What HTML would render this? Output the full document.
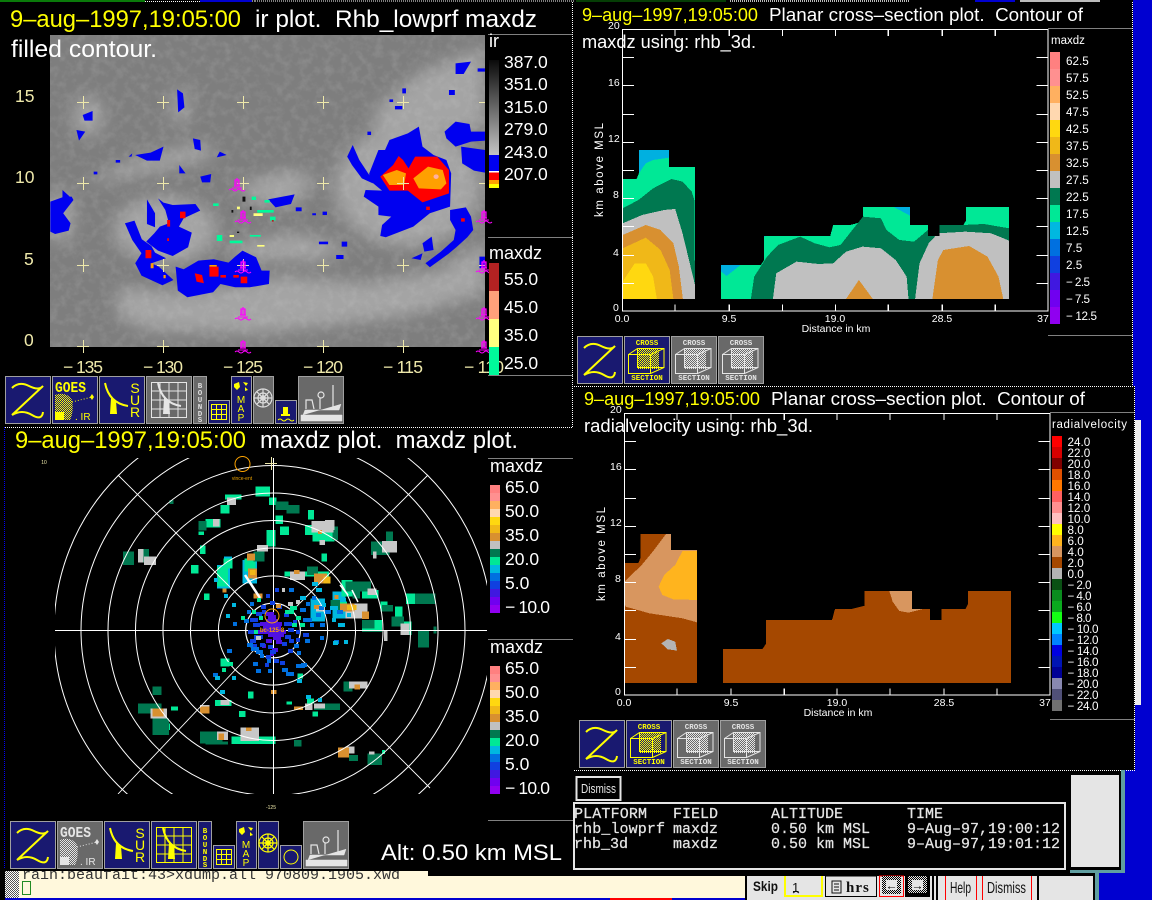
<!DOCTYPE html>
<html><head><meta charset="utf-8"><title>Zebra display</title>
<style>
html,body{margin:0;padding:0;background:#000;width:1152px;height:900px;overflow:hidden}
svg{display:block;position:absolute;left:0;top:0}
text{font-family:"Liberation Sans",sans-serif;white-space:pre}
.w{fill:#fff}.y{fill:#ff0}.p{fill:#eee8aa}
.l{fill:#fff;font-size:17.5px}
.m{fill:#fff;font-size:11.7px}
.s{fill:#fff;font-size:10.5px}
.t{fill:#e5e5e5;font-family:"Liberation Mono",monospace;font-size:15px;stroke:#e5e5e5;stroke-width:.25}
.b{font-family:"Liberation Mono",monospace;font-weight:bold;font-size:7.5px;text-anchor:middle}
</style></head><body>
<svg width="1152" height="900" viewBox="0 0 1152 900" xmlns="http://www.w3.org/2000/svg">
<defs>
<filter id="bl" x="-30%" y="-30%" width="160%" height="160%"><feGaussianBlur stdDeviation="24"/></filter>
<filter id="tx" x="0" y="0" width="100%" height="100%"><feTurbulence type="fractalNoise" baseFrequency=".12" numOctaves="3" seed="7"/><feColorMatrix values="0 0 0 0 .8 0 0 0 0 .8 0 0 0 0 .8 1.8 0 0 0 -.75"/></filter>
<pattern id="cy" width="2" height="2" patternUnits="userSpaceOnUse"><rect width="2" height="2" fill="#191970"/><rect width="1" height="1" fill="#ff0"/><rect x="1" y="1" width="1" height="1" fill="#ff0"/></pattern>
<pattern id="cw" width="2" height="2" patternUnits="userSpaceOnUse"><rect width="2" height="2" fill="#696969"/><rect width="1" height="1" fill="#e5e5e5"/><rect x="1" y="1" width="1" height="1" fill="#e5e5e5"/></pattern>
<pattern id="cg" width="2" height="2" patternUnits="userSpaceOnUse"><rect width="2" height="2" fill="#fff"/><rect width="1" height="1" fill="#555"/><rect x="1" y="1" width="1" height="1" fill="#555"/></pattern>
<pattern id="cb" width="2" height="2" patternUnits="userSpaceOnUse"><rect width="2" height="2" fill="#e5e5e5"/><rect width="1" height="1" fill="#000"/><rect x="1" y="1" width="1" height="1" fill="#000"/></pattern>
<g id="z"><rect x=".5" y=".5" width="45" height="47" fill="#191970" stroke="#a0a0a0"/><path d="M7 12Q14 5 24 10T38 10L7 39Q17 33 27 39T38 36" fill="none" stroke="#ff0" stroke-width="2"/></g>
<g id="buoy" fill="none" stroke="#f0f"><path d="M-2-10h4v6h-4zM-3-4h6M0-12v2" stroke-width="1.2" fill="#f0f" fill-opacity=".45"/><path d="M-8 0q2-2 4 0t4 0 4 0 4 0" stroke-width="1"/><path d="M-5-2h10" stroke-width="1"/></g>
<g id="grid" fill="none" stroke="currentColor" stroke-width="1"><rect x="5.5" y="6.5" width="35" height="35"/><path d="M14 6.5v35M23 6.5v35M32 6.5v35M5.5 15h35M5.5 24h35M5.5 33h35"/></g>
<g id="dish"><path d="M12 7Q16 27 35 30" fill="none" stroke="currentColor" stroke-width="2"/><path d="M18 22l5 3 1 13h-7z" fill="currentColor"/></g>
<g id="sg" fill="none" stroke="currentColor"><rect x="3.5" y="4.5" width="15" height="15"/><path d="M8.500 4.500v15M13.500 4.500v15M3.500 9.500h15M3.500 14.500h15"/></g>
<g id="wheel" fill="none" stroke="currentColor" stroke-width="1.2"><circle cx="10" cy="22" r="9"/><circle cx="10" cy="22" r="5"/><circle cx="10" cy="22" r="2.300"/><path d="M10 13v18M1 22h18M3.600 15.600l12.800 12.800M16.400 15.600L3.600 28.400"/></g>
<g id="ship" fill="none" stroke="currentColor"><path d="M3 39h41v6H3zM5 39l2-5h34l2-6" fill="currentColor" stroke-width=".5"/><path d="M8 33V24h6l2 9M22 33V22M35 33V9" stroke-width="1.2"/><circle cx="23" cy="19" r="3" stroke-width="1.2"/></g>
<g id="cube" fill="none" stroke="currentColor" stroke-width="1"><path d="M4.500 18.500h22v19h-22zM4.500 18.500l9-6h26.500v19l-13.500 6M26.500 18.500l13.500-6M13.500 12.500v19h26.500"/></g>
<g id="cy1"><rect x=".5" y=".5" width="45" height="47" fill="#191970" stroke="#a0a0a0"/><rect x="13" y="13" width="22" height="20" fill="url(#cy)"/><use href="#cube" color="#ff0"/><text class="b" x="23" y="9" fill="#ff0">CROSS</text><text class="b" x="23" y="44" fill="#ff0">SECTION</text></g>
<g id="cg1"><rect x=".5" y=".5" width="45" height="47" fill="#696969" stroke="#a0a0a0"/><rect x="13" y="13" width="22" height="20" fill="url(#cw)"/><use href="#cube" color="#e5e5e5"/><text class="b" x="23" y="9" fill="#e5e5e5">CROSS</text><text class="b" x="23" y="44" fill="#e5e5e5">SECTION</text></g>
<g id="sil"><path d="M127 537h38l6-17v-70h82v51h71v396H127zM395 795h108l9-15V708h180l8-33h46l35-10v-44h128v54h49v33h32v-33h65l7-15v-39h117v276H395z"/></g>
<g id="ticks" fill="none" stroke="#fff" stroke-width="3"><path d="M127 88H1285V933H127zM270 933v-20M417 933v-20M562 933v-20M706 933v-20M850 933v-20M997 933v-20M1141 933v-20M270 88v20M417 88v20M562 88v20M706 88v20M850 88v20M997 88v20M1141 88v20M127 172h31M127 256h31M127 343h31M127 427h31M127 511h31M127 595h31M127 679h31M127 766h31M127 850h31M1285 172h-31M1285 256h-31M1285 343h-31M1285 427h-31M1285 511h-31M1285 595h-31M1285 679h-31M1285 766h-31M1285 850h-31"/></g>
<clipPath id="rc"><rect x="55" y="458" width="432" height="336"/></clipPath>
<clipPath id="term"><rect x="19" y="871" width="726" height="26"/></clipPath>
</defs>

<!-- backgrounds -->
<rect width="1152" height="900" fill="#000"/>
<rect x="1133" y="0" width="19" height="386" fill="#0000d0"/>
<rect x="1135" y="386" width="17" height="514" fill="#0000d0"/>
<rect x="1125" y="770" width="27" height="130" fill="#0000d0"/>
<rect x="1099" y="873" width="53" height="27" fill="#0000d0"/>
<path d="M0 1h145" stroke="#0a7a0a" stroke-width="2"/><path d="M145 1.500h55M255 1h-50" stroke="#fff" stroke-width="1" stroke-dasharray="1 1"/><path d="M200 1h52" stroke="#0000d0" stroke-width="2"/><path d="M255 1h320M576 1h150" stroke="#fff" stroke-dasharray="1 1"/><path d="M576 1h150" stroke="#0a7a0a" stroke-width="1"/><path d="M730 1h180" stroke="#bbb" stroke-dasharray="1 1" stroke-width="2"/><path d="M975 1h40" stroke="#0000d0" stroke-width="2"/><path d="M1020 1h80" stroke="#bbb" stroke-width="2"/>

<!-- IR MAP -->
<rect x="50" y="35" width="435" height="312" fill="#7e7e7e"/>
<svg x="50" y="35" width="435" height="312" viewBox="50 35 435 312">
<g transform="scale(.3674 .3333)">
<g filter="url(#bl)" fill="#bcbcbc" opacity=".62">
<path d="M1020 330L1140 220 1320 140V390H1150L1020 420z"/>
<ellipse cx="1110" cy="560" rx="200" ry="180"/>
<path d="M230 550L340 490 460 450 560 430 590 470 440 510 300 540z"/>
<path d="M320 860L520 880 760 830 1000 850 1200 810 1320 720V880L1100 950 700 1000 400 990 320 950z"/>
<ellipse cx="240" cy="350" rx="40" ry="60"/><ellipse cx="490" cy="320" rx="22" ry="60"/>
<ellipse cx="450" cy="690" rx="140" ry="100"/><ellipse cx="165" cy="650" rx="35" ry="80"/>
<path d="M640 560L780 510 860 530 800 620 700 610z"/><path d="M610 740L800 700 950 740 880 780 660 780z"/>
</g>
</g>
<rect x="50" y="35" width="435" height="312" filter="url(#tx)" opacity=".16"/>
<g transform="scale(.3674 .3333)">
<g fill="#0000f0">
<path d="M1005 520L1030 450 1048 450 1060 420 1110 400 1140 380 1150 440 1180 465 1215 480 1228 520 1225 620 1170 640 1125 680 1050 712 1035 708 1040 675 1065 650 1030 645 1030 620 990 590 995 570 1040 572 1005 540z"/>
<path d="M945 470L960 435 978 480 1005 525 1015 550 985 535 958 495z"/>
<path d="M1210 395L1240 365 1278 372 1282 395 1320 395V422L1282 425 1240 440 1215 415z"/>
<path d="M1255 440L1320 450V518L1290 512 1258 490z"/>
<path d="M1225 630L1268 622 1282 650 1288 690 1272 712 1242 742 1220 762 1170 802 1158 790 1200 755 1235 720 1240 690 1225 660z"/>
<path d="M1240 190L1282 185 1262 222 1240 222zM1222 270h16v15h-16zM1150 730l25-20 5 40-25 5zM1120 775l30-15-5 20zM1305 770h15v35h-15zM1000 395h10v10h-10z"/>
<path d="M137 605L175 590 195 590 200 600 172 640 192 670 187 692 150 702 137 695z"/>
<path d="M430 595L445 608 470 615 532 612 545 632 500 655 487 680 522 698 512 742 470 768 430 752 398 725 420 700 435 680 460 670 450 630z"/>
<path d="M340 670L366 662 386 718 412 738 422 758 452 775 412 790 432 800 472 840 442 856 385 827 368 790 385 760 360 720z"/>
<path d="M478 800L500 808 540 782 582 778 622 788 640 770 660 752 697 772 712 812 734 812 732 852 680 862 640 862 600 852 580 877 510 892 484 872z"/>
<path d="M730 598L802 583 792 612 750 622zM545 530L575 522 572 547 550 547zM488 495L505 520 488 520zM525 415L545 420 547 452 530 447zM368 465L410 458 445 440 435 482 400 482zM225 345L252 333 252 362 230 362zM208 390L232 395 215 422zM482 268L498 280 502 322 485 337zM598 455L617 465 590 472zM400 598L422 640 422 682 400 672zM805 622h16v12h-16zM850 640h10v6h-10zM878 635h12v10h-12zM868 725h25v8h-25zM930 725h15v15h-15zM915 765h20v12h-20zM1075 318h20v10h-20zM1095 265h10v15h-10zM360 460l-10 10 8 0zM315 480h12v8h-12zM1060 298h10v8h-10zM1300 205h20v10h-20zM255 515h10v8h-10zM170 570l20 20-20 4z"/>
</g>
<g fill="#f00">
<path d="M1035 530L1070 495 1085 468 1097 480 1112 505 1130 470 1190 470 1222 510 1222 580 1150 607 1110 572 1060 572z"/>
<path d="M490 635h15v20h-15zM396 750h16v25h-16zM530 820l20 5 5 25-20-5zM570 800h25v30h-25zM600 825h15v8h-15zM635 825h15v8h-15zM655 830h18v20h-18zM1255 655h10v10h-10zM1160 620h10v10h-10zM455 660h8v20h-8zM455 715h5v8h-5z"/>
</g>
<g fill="#ffa000"><path d="M1042 525L1080 510 1105 520 1100 555 1060 555zM1125 535L1165 500 1205 510 1215 550 1200 568 1140 565z"/></g>
<path d="M410 790h8v15h-8zM445 825h6v10h-6zM570 795h20v5h-20z" fill="#ffa000"/>
<circle cx="1187" cy="530" r="7" fill="#ffb0a0"/>
<g fill="#00fa9a"><path d="M580 610h15v8h-15zM685 590h12v10h-12zM720 600h14v8h-14zM700 630h45v8h-45zM590 705h15v18h-15zM625 722h35v8h-35zM680 705h30v5h-30zM735 650h15v12h-15z"/></g>
<g fill="#ffff80"><path d="M690 640h25v8h-25zM625 705h12v6h-12zM700 735h20v5h-20zM645 620h8v8h-8z"/></g>
<g fill="#111"><path d="M660 590h8v15h-8zM630 630h5v8h-5zM645 695h6v4h-6zM680 620h5v10h-5z"/></g>
<g fill="#b22222"><path d="M740 660h5v5h-5z"/></g>
</g>
<g stroke="#eee8aa" stroke-width="1" shape-rendering="crispEdges" fill="none">
<path d="M77 102.500h12M83.500 96v13M157 102.500h12M163.500 96v13M237 102.500h12M243.500 96v13M317 102.500h12M323.500 96v13M397 102.500h12M403.500 96v13M479 102.500h12M485.500 96v13"/>
<path d="M77 183.500h12M83.500 177v13M157 183.500h12M163.500 177v13M237 183.500h12M243.500 177v13M317 183.500h12M323.500 177v13M397 183.500h12M403.500 177v13M479 183.500h12M485.500 177v13"/>
<path d="M77 265.500h12M83.500 259v13M157 265.500h12M163.500 259v13M237 265.500h12M243.500 259v13M317 265.500h12M323.500 259v13M397 265.500h12M403.500 259v13M479 265.500h12M485.500 259v13"/>
</g>
</svg>
<path d="M77 346.500h12M83.500 340v13M157 346.500h12M163.500 340v13M317 346.500h12M323.500 340v13M397 346.500h12M403.500 340v13" stroke="#eee8aa" stroke-width="1" shape-rendering="crispEdges" fill="none"/>
<g>
<use href="#buoy" x="237" y="190"/><use href="#buoy" x="243" y="222"/><use href="#buoy" x="243" y="272"/><use href="#buoy" x="243" y="319"/><use href="#buoy" x="243" y="352"/>
<use href="#buoy" x="484" y="222"/><use href="#buoy" x="484" y="272"/><use href="#buoy" x="484" y="319"/><use href="#buoy" x="484" y="352"/>
</g>
<g style="font-size:17.500px" fill="#eee8aa">
<text x="15" y="102">15</text><text x="15" y="183">10</text><text x="24" y="265">5</text><text x="24" y="346">0</text>
<text x="63" y="373" textLength="40">− 135</text><text x="143" y="373" textLength="40">− 130</text><text x="223" y="373" textLength="40">− 125</text><text x="303" y="373" textLength="40">− 120</text><text x="383" y="373" textLength="40">− 115</text><text x="464" y="373" textLength="40">− 110</text>
</g>
<text x="10" y="27" class="y" style="font-size:23.7px" textLength="231" lengthAdjust="spacingAndGlyphs">9–aug–1997,19:05:00</text>
<text x="255" y="27" class="w" style="font-size:23.700px" textLength="282" lengthAdjust="spacingAndGlyphs">ir plot.  Rhb_lowprf maxdz</text>
<text x="11" y="57" class="w" style="font-size:23.700px" textLength="146" lengthAdjust="spacingAndGlyphs">filled contour.</text>

<!-- IR legends -->
<path d="M488 34.500h85M488 237.500h85M488 375.500h85" stroke="#808080" shape-rendering="crispEdges"/>
<text x="489" y="47" class="w" style="font-size:18px">ir</text>
<linearGradient id="gr" x1="0" y1="0" x2="0" y2="1"><stop offset="0" stop-color="#0a0a0a"/><stop offset="1" stop-color="#c4c4c4"/></linearGradient>
<rect x="489" y="60" width="10" height="95" fill="url(#gr)"/>
<rect x="489" y="155" width="10" height="16" fill="#0000f0"/><rect x="489" y="171" width="10" height="1.500" fill="#fff"/><rect x="489" y="172.500" width="10" height="4" fill="#f00"/><rect x="489" y="176.500" width="10" height="4" fill="#f00"/><rect x="489" y="180" width="10" height="4" fill="#ffa000"/><rect x="489" y="184" width="10" height="4" fill="#ff0"/>
<g class="l"><text x="504" y="68">387.0</text><text x="504" y="90">351.0</text><text x="504" y="113">315.0</text><text x="504" y="135">279.0</text><text x="504" y="158">243.0</text><text x="504" y="180">207.0</text></g>
<text x="489" y="259" class="w" style="font-size:18px">maxdz</text>
<rect x="489" y="263" width="10" height="28" fill="#b22222"/><rect x="489" y="291" width="10" height="28" fill="#ffa07a"/><rect x="489" y="319" width="10" height="28" fill="#ffff80"/><rect x="489" y="347" width="10" height="28" fill="#00fa9a"/>
<g class="l"><text x="504" y="285">55.0</text><text x="504" y="313">45.0</text><text x="504" y="341">35.0</text><text x="504" y="369">25.0</text></g>

<!-- top toolbar -->
<use href="#z" x="5" y="376"/>
<g transform="translate(52 376)"><rect x=".5" y=".5" width="45" height="47" fill="#191970" stroke="#a0a0a0"/><text x="3" y="16" fill="#ff0" style="font-family:'Liberation Mono',monospace;font-weight:bold;font-size:15px" textLength="31" lengthAdjust="spacingAndGlyphs">GOES</text><path d="M3 19Q14 15 20 24 22 36 18 44H3z" fill="url(#cy)"/><rect x="3" y="36" width="9" height="8" fill="#ff0"/><path d="M20 26L40 21" stroke="#ff0" stroke-dasharray="1 2"/><path d="M40 18l2 3 -2 3-2-3z" fill="#ff0"/><text x="23" y="44" fill="#ff0" style="font-size:10px">. IR</text></g>
<g transform="translate(99 376)"><rect x=".5" y=".5" width="45" height="47" fill="#191970" stroke="#a0a0a0"/><use href="#dish" color="#ff0" x="-6"/><text x="36" y="17" fill="#ff0" text-anchor="middle" style="font-size:14px">S</text><text x="36" y="29" fill="#ff0" text-anchor="middle" style="font-size:14px">U</text><text x="36" y="41" fill="#ff0" text-anchor="middle" style="font-size:14px">R</text></g>
<g transform="translate(146 376)"><rect x=".5" y=".5" width="45" height="47" fill="#696969" stroke="#a0a0a0"/><use href="#grid" color="#e5e5e5"/><use href="#dish" color="#e5e5e5"/></g>
<g transform="translate(193 376)"><rect x=".5" y=".5" width="13" height="47" fill="#696969" stroke="#a0a0a0"/><text class="b" fill="#ddd" x="7" y="12">B</text><text class="b" fill="#ddd" x="7" y="19">O</text><text class="b" fill="#ddd" x="7" y="26">U</text><text class="b" fill="#ddd" x="7" y="33">N</text><text class="b" fill="#ddd" x="7" y="40">D</text><text class="b" fill="#ddd" x="7" y="46">S</text></g>
<g transform="translate(208 400)"><rect x=".5" y=".5" width="21" height="23" fill="#191970" stroke="#a0a0a0"/><use href="#sg" color="#ff0" y="0"/></g>
<g transform="translate(231 376)"><rect x=".5" y=".5" width="20" height="47" fill="#191970" stroke="#a0a0a0"/><path d="M3 8l5-2 1 5-3 3-3-3zM12 6l5 1-2 3zM14 11l3 3-3 1z" fill="#ff0"/><text x="10" y="27" fill="#ff0" text-anchor="middle" style="font-size:10px">M</text><text x="10" y="36" fill="#ff0" text-anchor="middle" style="font-size:10px">A</text><text x="10" y="45" fill="#ff0" text-anchor="middle" style="font-size:10px">P</text></g>
<g transform="translate(253 376)"><rect x=".5" y=".5" width="20" height="47" fill="#696969" stroke="#a0a0a0"/><use href="#wheel" color="#ddd"/></g>
<g transform="translate(275 400)"><rect x=".5" y=".5" width="21" height="23" fill="#191970" stroke="#a0a0a0"/><path d="M8 7h5v7h-5zM6 14h9v2H6z" fill="#ff0"/><path d="M3 20q2-2 4 0t4 0 4 0 4 0" fill="none" stroke="#ff0"/></g>
<g transform="translate(298 376)"><rect x=".5" y=".5" width="45" height="47" fill="#696969" stroke="#a0a0a0"/><use href="#ship" color="#e5e5e5"/></g>
<path d="M5 427.500H573" stroke="#fff" stroke-dasharray="1 1"/><path d="M572.500 2V427" stroke="#fff" stroke-dasharray="1 1"/>

<!-- PANEL 1 cross-section -->
<g transform="translate(576 0) scale(.3674 .3333)" shape-rendering="crispEdges">
<use href="#sil" fill="#00e896"/>
<path d="M171 450h82v23l-43 7-20 10-19 30z" fill="#00b0e0"/>
<path d="M127 625L170 600 210 565 260 537 290 545 315 575 322 600 324 897H127z" fill="#007850"/>
<path d="M127 670L180 645 240 630 270 627 290 700 324 855V897H127z" fill="#c0c0c0"/>
<path d="M127 705L190 675 230 690 265 730 280 800 291 897H127z" fill="#d89030"/>
<path d="M127 745L190 713 230 750 255 810 265 897H127z" fill="#f0b818"/>
<path d="M127 845L160 790H190L210 830 220 897H127z" fill="#ffd810"/>
<path d="M395 795h53l-38 33-15-13z" fill="#00b0e0"/><path d="M512 708h4l-4 4z" fill="#00b0e0"/><path d="M865 621h44v26z" fill="#00b0e0"/>
<path d="M476 897L485 830 520 770 550 735 610 710 650 730 690 742 720 735 745 700 781 650 830 655 845 690 880 720 920 725 958 690 990 675H1055L1110 672 1179 685V897z" fill="#007850"/>
<path d="M536 897L545 820 600 785 660 792 700 790 735 755 780 740 830 745 870 780 900 830 905 897z" fill="#c0c0c0"/>
<path d="M923 897L935 790 960 730 985 700 1060 695 1130 700 1179 722V897z" fill="#c0c0c0"/>
<path d="M735 897L770 840 808 897zM970 897L985 780 1000 750 1070 738 1120 770 1150 830 1163 897z" fill="#d89030"/>
<path d="M958 675h32v33h-32z" fill="#000"/>
<use href="#ticks"/>
</g>
<g class="s"><text x="608" y="29">20</text><text x="608" y="86">16</text><text x="608" y="142">12</text><text x="613" y="198">8</text><text x="613" y="256">4</text><text x="613" y="311">0</text>
<text x="622" y="322" text-anchor="middle">0.0</text><text x="729" y="322" text-anchor="middle">9.5</text><text x="835" y="322" text-anchor="middle">19.0</text><text x="942" y="322" text-anchor="middle">28.5</text><text x="1043" y="322" text-anchor="middle">37</text>
<text x="836" y="332" text-anchor="middle">Distance in km</text></g>
<text transform="translate(603 217) rotate(-90)" class="w" style="font-size:11.5px" textLength="94">km above MSL</text>
<text x="582" y="21" class="y" style="font-size:18.1px" textLength="176" lengthAdjust="spacingAndGlyphs">9–aug–1997,19:05:00</text>
<text x="769" y="21" class="w" style="font-size:18.100px" textLength="314" lengthAdjust="spacingAndGlyphs">Planar cross–section plot.  Contour of</text>
<text x="582" y="48" class="w" style="font-size:18.100px" textLength="174" lengthAdjust="spacingAndGlyphs">maxdz using: rhb_3d.</text>
<path d="M1048 28.500h85M1048 335.500h85" stroke="#808080" shape-rendering="crispEdges"/>
<text x="1051" y="44" class="w" style="font-size:11.5px">maxdz</text>
<g shape-rendering="crispEdges">
<rect x="1050" y="52" width="10" height="17" fill="#ff8080"/><rect x="1050" y="69" width="10" height="17" fill="#ff9090"/><rect x="1050" y="86" width="10" height="17" fill="#ffb060"/><rect x="1050" y="103" width="10" height="17" fill="#ffd8b0"/><rect x="1050" y="120" width="10" height="17" fill="#ffd810"/><rect x="1050" y="137" width="10" height="17" fill="#f0b818"/><rect x="1050" y="154" width="10" height="17" fill="#d89030"/><rect x="1050" y="171" width="10" height="17" fill="#c0c0c0"/><rect x="1050" y="188" width="10" height="17" fill="#007850"/><rect x="1050" y="205" width="10" height="17" fill="#00e896"/><rect x="1050" y="222" width="10" height="17" fill="#00b8e0"/><rect x="1050" y="239" width="10" height="17" fill="#0070e0"/><rect x="1050" y="256" width="10" height="17" fill="#1040e0"/><rect x="1050" y="273" width="10" height="17" fill="#4018e0"/><rect x="1050" y="290" width="10" height="17" fill="#7000f0"/><rect x="1050" y="307" width="10" height="17" fill="#9000f0"/>
</g>
<g class="m"><text x="1066" y="65">62.5</text><text x="1066" y="82">57.5</text><text x="1066" y="99">52.5</text><text x="1066" y="116">47.5</text><text x="1066" y="133">42.5</text><text x="1066" y="150">37.5</text><text x="1066" y="167">32.5</text><text x="1066" y="184">27.5</text><text x="1066" y="201">22.5</text><text x="1066" y="218">17.5</text><text x="1066" y="235">12.5</text><text x="1066" y="252">7.5</text><text x="1066" y="269">2.5</text><text x="1066" y="286" textLength="24">− 2.5</text><text x="1066" y="303" textLength="24">− 7.5</text><text x="1066" y="320" textLength="31">− 12.5</text></g>
<use href="#z" x="577" y="336"/><use href="#cy1" x="624" y="336"/><use href="#cg1" x="671" y="336"/><use href="#cg1" x="718" y="336"/>
<path d="M574 386.500H1133" stroke="#fff" stroke-dasharray="1 1"/><path d="M1132.500 2V386" stroke="#fff" stroke-dasharray="1 1"/>

<!-- PANEL 2 cross-section -->
<g transform="translate(577.800 384) scale(.3674 .3333)" shape-rendering="crispEdges">
<use href="#sil" fill="#a54800"/>
<path d="M240 450h13v48h71v217l-39-12-90-15-65-20-3-15v-60l47-50 30-40z" fill="#d8965f"/>
<path d="M285 501h39v147l-64-2-30-13-10-25 15-35 30-30z" fill="#ffb41e"/>
<path d="M227 778l18-13 20 8 5 27-25-4z" fill="#b4b4b4"/>
<path d="M848 621h61v54h31l-40 11-25-5-18-28z" fill="#d8965f"/>
<use href="#ticks"/>
</g>
<g class="s"><text x="610" y="413">20</text><text x="610" y="470">16</text><text x="610" y="526">12</text><text x="615" y="582">8</text><text x="615" y="640">4</text><text x="615" y="695">0</text>
<text x="624" y="706" text-anchor="middle">0.0</text><text x="731" y="706" text-anchor="middle">9.5</text><text x="837" y="706" text-anchor="middle">19.0</text><text x="944" y="706" text-anchor="middle">28.5</text><text x="1045" y="706" text-anchor="middle">37</text>
<text x="838" y="716" text-anchor="middle">Distance in km</text></g>
<text transform="translate(605 601) rotate(-90)" class="w" style="font-size:11.5px" textLength="94">km above MSL</text>
<text x="584" y="405" class="y" style="font-size:18.1px" textLength="176" lengthAdjust="spacingAndGlyphs">9–aug–1997,19:05:00</text>
<text x="771" y="405" class="w" style="font-size:18.100px" textLength="314" lengthAdjust="spacingAndGlyphs">Planar cross–section plot.  Contour of</text>
<text x="584" y="432" class="w" style="font-size:18.100px" textLength="229" lengthAdjust="spacingAndGlyphs">radialvelocity using: rhb_3d.</text>
<path d="M1050 412.500h85M1050 719.500h85" stroke="#808080" shape-rendering="crispEdges"/>
<text x="1052" y="428" class="w" style="font-size:11.5px" textLength="75">radialvelocity</text>
<g shape-rendering="crispEdges">
<rect x="1052" y="436" width="10" height="11" fill="#ff0000"/><rect x="1052" y="447" width="10" height="11" fill="#d80000"/><rect x="1052" y="458" width="10" height="11" fill="#800000"/><rect x="1052" y="469" width="10" height="11" fill="#e05000"/><rect x="1052" y="480" width="10" height="11" fill="#ff7800"/><rect x="1052" y="491" width="10" height="11" fill="#ff6060"/><rect x="1052" y="502" width="10" height="11" fill="#ff9090"/><rect x="1052" y="513" width="10" height="11" fill="#ffc0c0"/><rect x="1052" y="524" width="10" height="11" fill="#ffff00"/><rect x="1052" y="535" width="10" height="11" fill="#ffb41e"/><rect x="1052" y="546" width="10" height="11" fill="#d8965f"/><rect x="1052" y="557" width="10" height="11" fill="#a54800"/><rect x="1052" y="568" width="10" height="11" fill="#b4b4b4"/><rect x="1052" y="579" width="10" height="11" fill="#0a5014"/><rect x="1052" y="590" width="10" height="11" fill="#0a8c1e"/><rect x="1052" y="601" width="10" height="11" fill="#0aaa1e"/><rect x="1052" y="612" width="10" height="11" fill="#14ff14"/><rect x="1052" y="623" width="10" height="11" fill="#00c8ff"/><rect x="1052" y="634" width="10" height="11" fill="#0082ff"/><rect x="1052" y="645" width="10" height="11" fill="#0000e0"/><rect x="1052" y="656" width="10" height="11" fill="#0014b4"/><rect x="1052" y="667" width="10" height="11" fill="#000096"/><rect x="1052" y="678" width="10" height="11" fill="#8888b0"/><rect x="1052" y="689" width="10" height="11" fill="#505078"/><rect x="1052" y="700" width="10" height="11" fill="#707070"/>
</g>
<g class="m"><text x="1067.500" y="446">24.0</text><text x="1067.500" y="457">22.0</text><text x="1067.500" y="468">20.0</text><text x="1067.500" y="479">18.0</text><text x="1067.500" y="490">16.0</text><text x="1067.500" y="501">14.0</text><text x="1067.500" y="512">12.0</text><text x="1067.500" y="523">10.0</text><text x="1067.500" y="534">8.0</text><text x="1067.500" y="545">6.0</text><text x="1067.500" y="556">4.0</text><text x="1067.500" y="567">2.0</text><text x="1067.500" y="578">0.0</text><text x="1067.500" y="589" textLength="24">− 2.0</text><text x="1067.500" y="600" textLength="24">− 4.0</text><text x="1067.500" y="611" textLength="24">− 6.0</text><text x="1067.500" y="622" textLength="24">− 8.0</text><text x="1067.500" y="633" textLength="31">− 10.0</text><text x="1067.500" y="644" textLength="31">− 12.0</text><text x="1067.500" y="655" textLength="31">− 14.0</text><text x="1067.500" y="666" textLength="31">− 16.0</text><text x="1067.500" y="677" textLength="31">− 18.0</text><text x="1067.500" y="688" textLength="31">− 20.0</text><text x="1067.500" y="699" textLength="31">− 22.0</text><text x="1067.500" y="710" textLength="31">− 24.0</text></g>
<use href="#z" x="579" y="720"/><use href="#cy1" x="626" y="720"/><use href="#cg1" x="673" y="720"/><use href="#cg1" x="720" y="720"/>
<rect x="1135" y="420" width="6" height="285" fill="#eee"/>
<path d="M574 770.500H1135" stroke="#fff" stroke-dasharray="1 1"/><path d="M1134.500 386V770" stroke="#fff" stroke-dasharray="1 1"/>

<!-- RADAR -->
<path d="M4.500 427V870" stroke="#0000f0" stroke-dasharray="1 1"/>
<text x="15" y="448" class="y" style="font-size:23.800px" textLength="231" lengthAdjust="spacingAndGlyphs">9–aug–1997,19:05:00</text>
<text x="260" y="448" class="w" style="font-size:23.800px" textLength="258" lengthAdjust="spacingAndGlyphs">maxdz plot.  maxdz plot.</text>
<g transform="translate(0 425) scale(.3674 .3333)" shape-rendering="crispEdges">
<path fill="#00b8e0" d="M590 420h36v70h-36zM660 405h40v70h-40zM845 520h40v70h-40zM905 500h35v80h-35zM610 395h22v30h-22z"/>
<path fill="#00e896" d="M695 185h40v30h-40zM612 208h46v15h-46zM600 240h25v25h-25zM732 218h20v22h-20zM838 255h17v28h-17zM560 282h40v25h-40zM540 320h15v10h-15zM750 272h20v25h-20zM762 305h25v25h-25zM725 315h25v50h-25zM545 362h15v25h-15zM830 300h20v30h-20zM850 320h60v30h-60zM875 385h15v25h-15zM608 400h25v30h-25zM520 420h20v25h-20zM590 425h30v60h-30zM555 505h15v20h-15zM775 440h120v15h-120zM930 465h30v50h-30zM985 495h45v25h-45zM1035 530h20v30h-20zM1105 505h30v32h-30zM1075 545h20v30h-20zM985 585h55v35h-55zM1100 590h20v40h-20zM585 825h45v18h-45zM650 858h18v18h-18zM630 935h120v22h-120zM465 845h20v12h-20zM675 800h15v20h-15zM925 530h20v20h-20zM665 400h30v40h-30zM780 830h15v8h-15zM835 820h20v15h-20zM850 860h15v15h-15zM455 895h8v20h-8zM1040 975h8v12h-8zM600 700h25v25h-25zM810 745h15v15h-15z"/>
<path fill="#007850" d="M750 230h35v25h-35zM780 240h35v25h-35zM540 288h22v28h-22zM462 225h10v12h-10zM335 380h30v40h-30zM375 372h30v40h-30zM1010 350h50v40h-50zM1050 320h20v30h-20zM1130 505h55v32h-55zM1138 618h30v50h-30zM940 470h70v30h-70zM960 500h20v20h-20zM905 305h15v40h-15zM985 585h35v25h-35zM1040 540h30v20h-30zM1065 575h35v30h-35zM935 770h25v30h-25zM415 880h45v50h-45zM375 835h65v30h-65zM545 920h60v35h-60zM560 950h60v8h-60zM1000 985h40v35h-40zM950 990h25v18h-25zM415 785h25v25h-25zM800 945h20v20h-20zM855 835h70v20h-70zM900 525h25v30h-25zM835 425h30v25h-30zM690 380h30v30h-30zM1180 605h8v20h-8z"/>
<path fill="#c8c8c8" d="M848 288h60v35h-60zM885 285h25v30h-25zM1040 348h40v35h-40zM1015 380h10v20h-10zM375 372h15v40h-15zM392 395h32v25h-32zM618 218h25v22h-25zM580 282h18v22h-18zM700 360h30v20h-30zM1090 595h25v35h-25zM1000 490h25v20h-25zM940 535h60v45h-60zM1045 618h10v30h-10zM410 850h45v30h-45zM655 908h50v40h-50zM590 920h30v25h-30zM950 770h50v20h-50zM855 835h30v15h-30zM830 835h20v20h-20zM545 840h25v20h-25zM600 825h25v15h-25zM940 965h25v20h-25zM790 440h40v25h-40zM860 540h25v20h-25zM1005 980h15v8h-15zM870 345h15v15h-15z"/>
<path fill="#d89030" d="M865 315h12v12h-12zM672 385h22v22h-22zM675 430h25v30h-25zM855 445h35v30h-35zM800 435h15v12h-15zM925 535h40v25h-40zM985 560h20v22h-20zM415 850h30v25h-30zM920 968h30v30h-30zM965 778h15v15h-15zM800 845h25v10h-25zM545 845h25v20h-25zM595 925h15v20h-15zM738 795h15v12h-15zM670 908h15v10h-15zM855 540h15v12h-15zM910 510h12v12h-12zM605 490h12v12h-12zM690 505h25v15h-25z"/>
<path fill="#f0b818" d="M880 455h20v20h-20zM945 540h25v15h-25zM680 435h15v15h-15z"/>
</g>
<g clip-path="url(#rc)" fill="none" stroke="#fff" shape-rendering="geometricPrecision">
<circle cx="273" cy="630.500" r="27.300" stroke-width="1.200"/><circle cx="273" cy="630.500" r="54.600"/><circle cx="273" cy="630.500" r="82.500"/><circle cx="273" cy="630.500" r="110"/><circle cx="273" cy="630.500" r="137.500"/><circle cx="273" cy="630.500" r="165"/><circle cx="273" cy="630.500" r="192"/><circle cx="273" cy="630.500" r="219"/>
<path d="M55 630.500H487M273.500 458V794"/>
<path d="M254 611L118 475M292 611L428 475M254 650L118 794M292 650L430 788" stroke-width=".9"/>
</g>
<path d="M245 575l15 23" stroke="#fff" stroke-width="2.500" fill="none"/>
<path d="M340 585l8 10M352 590l6 12" stroke="#fff" stroke-width="1.500" fill="none"/>
<!-- center scatter -->
<g fill="none" stroke-width="3.600" shape-rendering="crispEdges">
<path stroke="#5010e0" d="M260 624h22M263 628h18M266 621h12M268 617h8M258 632h28M268 635h16M273 638h8M266 641h6M276 642h6M266 614h8M262 646h4M272 650h6M270 654h4"/>
<path stroke="#1040e0" d="M250 620h8M253 625h7M248 632h8M254 637h9M250 641h6M260 645h5M268 647h5M270 652h6M266 657h5M284 624h8M288 630h6M285 637h6M289 641h5M293 622h4M284 615h5M256 614h6M261 607h5M270 603h5M277 607h5M266 596h4M275 590h4M282 644h5M274 661h5M265 665h4M280 663h5M288 651h5M303 635h6M262 612h4M296 632h4M296 640h4M252 646h5M258 652h5"/>
<path stroke="#0070e0" d="M244 621h5M247 612h4M247 645h6M251 649h8M256 652h7M260 656h4M303 620h9M310 625h4M316 615h5M305 641h5M320 638h4M294 646h5M297 653h4M296 666h9M282 670h6M301 665h6M286 674h8M253 664h5M256 671h5M267 661h4M319 608h5M312 598h4M289 590h5M334 642h5M337 612h6M227 651h5M213 675h5M268 671h4M300 610h6M306 604h4M325 612h6M320 625h5M250 604h4M233 624h4"/>
<path stroke="#00b8e0" d="M226 616h4M214 580h4M232 605h4M224 596h4M330 608h8M332 620h4M338 625h7M316 590h6M322 605h4M333 643h5M344 642h4M347 615h4M215 678h5M220 692h5M297 681h5M306 697h5M318 700h4M232 678h4M300 598h6M312 584h6M340 600h6"/>
<path stroke="#00e896" d="M285 612h9M290 608h7M296 618h5M300 625h5M292 625h5M252 612h4M257 600h4M241 618h4M254 632h4M259 618h4M222 670h4M228 664h5"/>
<path stroke="#c8c8c8" d="M256 638h5M288 604h5M296 602h4M282 590h3"/>
<path stroke="#d89030" d="M276 606h5"/>
</g>
<g fill="none" stroke="#ffa500"><circle cx="242.500" cy="464" r="7.500"/><circle cx="272" cy="616" r="7"/></g>
<path d="M265 463.500h12M271.500 457v13" stroke="#eee8aa" fill="none"/>
<text x="242" y="480" fill="#e8a000" text-anchor="middle" style="font-size:5px">vince-ent</text>
<text x="272" y="632" fill="#ffa500" text-anchor="middle" style="font-size:6px;font-weight:bold">bc-125-8</text>
<text x="44" y="464" fill="#eee8aa" text-anchor="middle" style="font-size:5px">10</text>
<text x="271" y="809" fill="#eee8aa" text-anchor="middle" style="font-size:5px">-125</text>
<path d="M488 458.500h85M488 639.500h85M488 820.500h85" stroke="#808080" shape-rendering="crispEdges"/>
<text x="490" y="472" class="w" style="font-size:18px">maxdz</text><text x="490" y="653" class="w" style="font-size:18px">maxdz</text>
<g shape-rendering="crispEdges">
<g id="rb"><rect x="490" y="485" width="10" height="8" fill="#ff8080"/><rect x="490" y="493" width="10" height="8" fill="#ff9090"/><rect x="490" y="501" width="10" height="8" fill="#ffb060"/><rect x="490" y="509" width="10" height="8" fill="#ffd8b0"/><rect x="490" y="517" width="10" height="8" fill="#ffd810"/><rect x="490" y="525" width="10" height="8" fill="#f0b818"/><rect x="490" y="533" width="10" height="8" fill="#d89030"/><rect x="490" y="541" width="10" height="8" fill="#c0c0c0"/><rect x="490" y="549" width="10" height="8" fill="#007850"/><rect x="490" y="557" width="10" height="8" fill="#00e896"/><rect x="490" y="565" width="10" height="8" fill="#00b8e0"/><rect x="490" y="573" width="10" height="8" fill="#0070e0"/><rect x="490" y="581" width="10" height="8" fill="#1040e0"/><rect x="490" y="589" width="10" height="8" fill="#4018e0"/><rect x="490" y="597" width="10" height="8" fill="#7000f0"/><rect x="490" y="605" width="10" height="8" fill="#9000f0"/></g>
<use href="#rb" y="181"/>
</g>
<g class="l"><text x="505" y="493">65.0</text><text x="505" y="517">50.0</text><text x="505" y="541">35.0</text><text x="505" y="565">20.0</text><text x="505" y="589">5.0</text><text x="505" y="613" textLength="45">− 10.0</text>
<text x="505" y="674">65.0</text><text x="505" y="698">50.0</text><text x="505" y="722">35.0</text><text x="505" y="746">20.0</text><text x="505" y="770">5.0</text><text x="505" y="794" textLength="45">− 10.0</text></g>
<text x="381" y="860" class="w" style="font-size:22.500px" textLength="181" lengthAdjust="spacingAndGlyphs">Alt: 0.50 km MSL</text>

<!-- bottom toolbar -->
<use href="#z" x="10" y="821"/>
<g transform="translate(57 821)"><rect x=".5" y=".5" width="45" height="47" fill="#696969" stroke="#a0a0a0"/><text x="3" y="16" fill="#e5e5e5" style="font-family:'Liberation Mono',monospace;font-weight:bold;font-size:15px" textLength="31" lengthAdjust="spacingAndGlyphs">GOES</text><path d="M3 19Q14 15 20 24 22 36 18 44H3z" fill="url(#cw)"/><rect x="3" y="36" width="9" height="8" fill="#e5e5e5"/><path d="M20 26L40 21" stroke="#e5e5e5" stroke-dasharray="1 2"/><path d="M40 18l2 3-2 3-2-3z" fill="#e5e5e5"/><text x="23" y="44" fill="#e5e5e5" style="font-size:10px">. IR</text></g>
<g transform="translate(104 821)"><rect x=".5" y=".5" width="45" height="47" fill="#191970" stroke="#a0a0a0"/><use href="#dish" color="#ff0" x="-6"/><text x="36" y="17" fill="#ff0" text-anchor="middle" style="font-size:14px">S</text><text x="36" y="29" fill="#ff0" text-anchor="middle" style="font-size:14px">U</text><text x="36" y="41" fill="#ff0" text-anchor="middle" style="font-size:14px">R</text></g>
<g transform="translate(151 821)"><rect x=".5" y=".5" width="45" height="47" fill="#191970" stroke="#a0a0a0"/><use href="#grid" color="#ff0"/><use href="#dish" color="#ff0"/></g>
<g transform="translate(198 821)"><rect x=".5" y=".5" width="13" height="47" fill="#191970" stroke="#a0a0a0"/><text class="b" fill="#ff0" x="7" y="12">B</text><text class="b" fill="#ff0" x="7" y="19">O</text><text class="b" fill="#ff0" x="7" y="26">U</text><text class="b" fill="#ff0" x="7" y="33">N</text><text class="b" fill="#ff0" x="7" y="40">D</text><text class="b" fill="#ff0" x="7" y="46">S</text></g>
<g transform="translate(213 845)"><rect x=".5" y=".5" width="21" height="23" fill="#191970" stroke="#a0a0a0"/><use href="#sg" color="#ff0"/></g>
<g transform="translate(236 821)"><rect x=".5" y=".5" width="20" height="47" fill="#191970" stroke="#a0a0a0"/><path d="M3 8l5-2 1 5-3 3-3-3zM12 6l5 1-2 3zM14 11l3 3-3 1z" fill="#ff0"/><text x="10" y="27" fill="#ff0" text-anchor="middle" style="font-size:10px">M</text><text x="10" y="36" fill="#ff0" text-anchor="middle" style="font-size:10px">A</text><text x="10" y="45" fill="#ff0" text-anchor="middle" style="font-size:10px">P</text></g>
<g transform="translate(258 821)"><rect x=".5" y=".5" width="20" height="47" fill="#191970" stroke="#a0a0a0"/><use href="#wheel" color="#ff0"/></g>
<g transform="translate(280 845)"><rect x=".5" y=".5" width="21" height="23" fill="#191970" stroke="#a0a0a0"/><circle cx="11" cy="12" r="7" fill="none" stroke="#ff0"/></g>
<g transform="translate(303 821)"><rect x=".5" y=".5" width="45" height="47" fill="#696969" stroke="#a0a0a0"/><use href="#ship" color="#e5e5e5"/></g>

<!-- terminal -->
<rect x="5" y="871" width="14" height="29" fill="url(#cg)"/>
<rect x="19" y="871" width="726" height="27" fill="#fff8dc"/>
<g clip-path="url(#term)"><text x="22" y="879" fill="#333" style="font-family:'Liberation Mono',monospace;font-size:15px" textLength="378">rain:beaufait:43&gt;xdump.all 970809.1905.xwd</text></g>
<rect x="22.500" y="881.500" width="8" height="13" fill="none" stroke="#228b22"/>
<rect x="0" y="898" width="745" height="2" fill="#0000d0"/>
<rect x="610" y="898" width="62" height="2" fill="#f00"/>
<rect x="0" y="868" width="5" height="32" fill="#000"/>

<!-- info window -->
<rect x="428" y="869" width="147" height="7" fill="#000"/>
<rect x="573" y="771" width="497" height="105" fill="#000"/>
<rect x="1071" y="775" width="48" height="92" fill="#e5e5e5"/>
<rect x="1071" y="867" width="50" height="3" fill="#000"/>
<rect x="1121" y="770" width="4" height="103" fill="#5f9ea0"/><rect x="1070" y="870" width="55" height="3" fill="#5f9ea0"/>
<rect x="576.500" y="777" width="44" height="23" fill="none" stroke="#e5e5e5" stroke-width="2"/>
<text x="581" y="793" fill="#e5e5e5" style="font-size:13px" textLength="35" lengthAdjust="spacingAndGlyphs">Dismiss</text>
<rect x="574" y="803" width="491" height="66" fill="none" stroke="#e5e5e5" stroke-width="2"/>
<text x="574" y="818" class="t" textLength="73">PLATFORM</text><text x="673" y="818" class="t">FIELD</text><text x="771" y="818" class="t">ALTITUDE</text><text x="907" y="818" class="t">TIME</text>
<text x="574" y="833" class="t" textLength="91">rhb_lowprf</text><text x="673" y="833" class="t">maxdz</text><text x="771" y="833" class="t">0.50 km MSL</text><text x="907" y="833" class="t" textLength="153">9–Aug–97,19:00:12</text>
<text x="574" y="848" class="t">rhb_3d</text><text x="673" y="848" class="t">maxdz</text><text x="771" y="848" class="t">0.50 km MSL</text><text x="907" y="848" class="t" textLength="153">9–Aug–97,19:01:12</text>

<!-- control bar -->
<rect x="745" y="876" width="348" height="24" fill="#e5e5e5"/>
<rect x="745" y="876" width="2" height="24" fill="#000"/>
<rect x="1093" y="873" width="2" height="27" fill="#000"/><rect x="1095" y="873" width="4" height="27" fill="#5f9ea0"/>
<rect x="932" y="876" width="2" height="24" fill="#000"/><rect x="936" y="876" width="2" height="24" fill="#000"/><rect x="1037" y="876" width="2" height="24" fill="#000"/>
<text x="753" y="891" fill="#111" style="font-size:14px;font-weight:bold" textLength="25" lengthAdjust="spacingAndGlyphs">Skip</text>
<path d="M785 876v20h37v-20" fill="none" stroke="#ff0" stroke-width="2"/>
<text x="792" y="892" fill="#111" style="font-size:13px">1</text><path d="M793 893l3-2 3 2" stroke="#111" fill="none"/>
<rect x="825.500" y="876" width="51" height="20.500" fill="none" stroke="#000"/>
<path d="M832 881h9v12h-9zM834 884h5M834 887h5M834 890h5" fill="none" stroke="#111"/>
<text x="846" y="892" fill="#111" style="font-family:'Liberation Serif',serif;font-weight:bold;font-size:15px;letter-spacing:1px">hrs</text>
<rect x="879.500" y="876" width="24" height="20.500" fill="none" stroke="#f00"/><rect x="882" y="876" width="19" height="18" fill="url(#cb)"/><rect x="886" y="880" width="11" height="10" fill="#e5e5e5"/><text x="891.500" y="889.500" fill="#000" text-anchor="middle" style="font-size:12px;font-weight:bold">←</text>
<rect x="905" y="876" width="25" height="21" fill="#000"/><rect x="908" y="876" width="19" height="17" fill="url(#cb)"/><rect x="912" y="880" width="11" height="10" fill="#e5e5e5"/><text x="917.500" y="889.500" fill="#000" text-anchor="middle" style="font-size:12px;font-weight:bold">→</text>
<path d="M945.500 876v24M976.500 876v24M982.500 876v24M1031.500 876v24" stroke="#f00"/>
<text x="950" y="893" fill="#111" style="font-size:16px" textLength="21" lengthAdjust="spacingAndGlyphs">Help</text>
<text x="987" y="893" fill="#111" style="font-size:16px" textLength="39" lengthAdjust="spacingAndGlyphs">Dismiss</text>
</svg>
</body></html>
